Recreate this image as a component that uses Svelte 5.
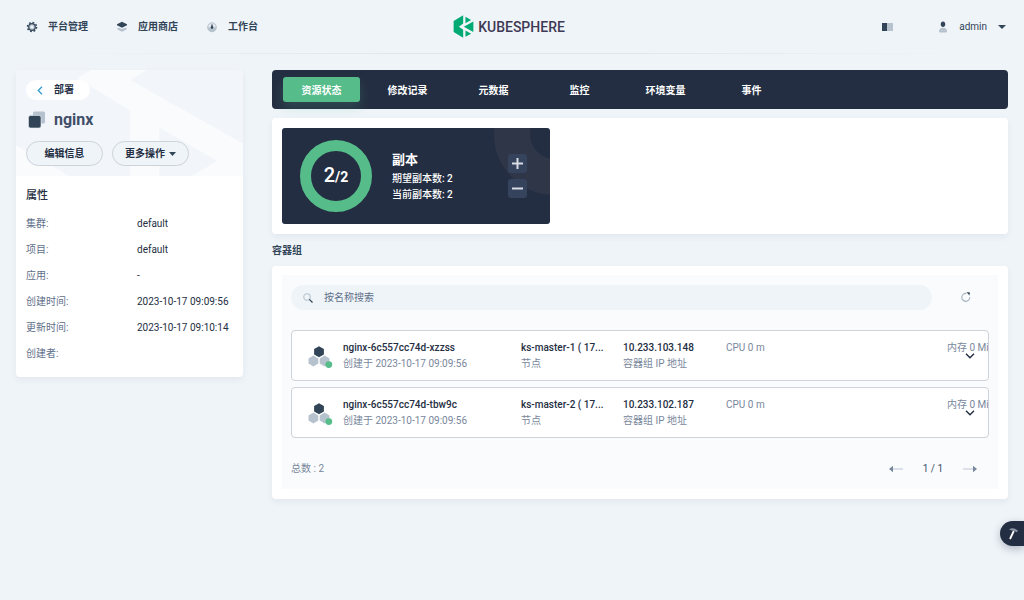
<script>
  const tabs = ["资源状态", "修改记录", "元数据", "监控", "环境变量", "事件"];
  let activeTab = $state("资源状态");

  const attributes = [
    { label: "集群", value: "default" },
    { label: "项目", value: "default" },
    { label: "应用", value: "-" },
    { label: "创建时间", value: "2023-10-17 09:09:56" },
    { label: "更新时间", value: "2023-10-17 09:10:14" },
    { label: "创建者", value: "" },
  ];

  const pods = [
    { name: "nginx-6c557cc74d-xzzss", created: "2023-10-17 09:09:56", node: "ks-master-1 ( 17...", ip: "10.233.103.148" },
    { name: "nginx-6c557cc74d-tbw9c", created: "2023-10-17 09:09:56", node: "ks-master-2 ( 17...", ip: "10.233.102.187" },
  ];

  let desired = $state(2);
  const current = 2;
  let query = $state("");
  let shown = $derived(pods.filter((pod) => pod.name.includes(query)));
</script>

<header class="topbar">
  <nav class="menu">
    <a href="#platform">
      <svg width="12" height="12" viewBox="0 0 12 12">
        <circle cx="6" cy="6" r="4.6" fill="none" stroke="#324558" stroke-width="1.4" stroke-dasharray="1.8 1.8" />
        <circle cx="6" cy="6" r="3.3" fill="#b6c2cd" stroke="#324558" stroke-width="1.2" />
        <circle cx="6" cy="6" r="1.6" fill="#eff4f9" />
      </svg>
      <span>平台管理</span>
    </a>
    <a href="#store">
      <svg width="12" height="12" viewBox="0 0 12 12">
        <path d="M1.5 6.5 6 8l4.5-1.5v2L6 10.8 1.5 8.5z" fill="#b6c2cd" />
        <path d="M6 .8 11 3.2v1L6 6.8 1 4.2v-1z" fill="#324558" />
      </svg>
      <span>应用商店</span>
    </a>
    <a href="#workspace">
      <svg width="12" height="12" viewBox="0 0 12 12">
        <circle cx="6" cy="6" r="4.2" fill="#e3e9ef" stroke="#b6c2cd" />
        <path d="M1.3 6.5h9.4A4.7 4.7 0 0 1 1.3 6.5z" fill="#b6c2cd" />
        <path d="M6 2.5 7.3 6.5a1.3 1.3 0 0 1-2.6 0z" fill="#324558" />
      </svg>
      <span>工作台</span>
    </a>
  </nav>

  <a class="logo" href="#home">
    <svg width="21" height="23" viewBox="44 46 62 70">
      <path d="M74 47v25L61 82l13 9v24L45 98V64zM105 66v32L76 82zM81 51l17 10-17 10zM81 93l17 10-17 9z" fill="#00aa72" />
    </svg>
    <span>KUBESPHERE</span>
  </a>

  <div class="tools">
    <button class="plain" aria-label="Docs">
      <svg width="11" height="8" viewBox="0 0 11 8">
        <path d="M0 0h5v8H0z" fill="#324558" />
        <path d="M5 0h6v8H5z" fill="#b6c2cd" />
      </svg>
    </button>
    <button class="plain user">
      <svg width="10" height="12" viewBox="0 0 10 12">
        <ellipse cx="5" cy="3.2" rx="2.2" ry="2.7" fill="#324558" />
        <path d="M1 10.5C1 8 2.5 6.8 5 6.8S9 8 9 10.5q0 1-1 1H2q-1 0-1-1z" fill="#b6c2cd" />
      </svg>
      <span>admin</span>
      <svg width="8" height="4" viewBox="0 0 8 4"><path d="M0 0h8L4 4z" fill="#324558" /></svg>
    </button>
  </div>
</header>

<div class="page">
  <aside class="panel side">
    <div class="side-head">
      <svg class="pattern" viewBox="48 30 681 317" preserveAspectRatio="none" aria-hidden="true">
        <path d="M275 30H440L390 60 729 250V347H575L652 302 478 202V347H390V150L230 55zM48 255 208 347H48z" fill="#fafbfd" />
      </svg>
      <a class="back" href="#deployments">
        <svg width="6" height="9" viewBox="0 0 6 9"><path d="M5 .7 1.2 4.5 5 8.3" fill="none" stroke="#329dce" stroke-width="1.3" /></svg>
        <span>部署</span>
      </a>
      <h1>
        <svg width="18" height="18" viewBox="0 0 18 18">
          <rect x="5" y="0.5" width="12" height="12" rx="1.5" fill="#b6c2cd" />
          <rect x="0.5" y="4.5" width="12.5" height="12.5" rx="2" fill="#324558" stroke="#e6ebf1" stroke-width=".6" />
        </svg>
        nginx
      </h1>
      <div class="actions">
        <button>编辑信息</button>
        <button>
          更多操作
          <svg width="7" height="4" viewBox="0 0 7 4"><path d="M0 0h7L3.5 4z" fill="#324558" /></svg>
        </button>
      </div>
    </div>
    <div class="side-body">
      <h2>属性</h2>
      <dl>
        {#each attributes as item}
          <div>
            <dt>{item.label}:</dt>
            <dd>{item.value}</dd>
          </div>
        {/each}
      </dl>
    </div>
  </aside>

  <main>
    <nav class="tabs">
      {#each tabs as tab}
        <button class:active={tab === activeTab} onclick={() => (activeTab = tab)}>{tab}</button>
      {/each}
    </nav>

    <section class="panel status">
      <div class="replicas">
        <svg class="rings" width="122" height="122" viewBox="0 0 122 122" aria-hidden="true">
          <circle cx="61" cy="61" r="43" fill="none" stroke="#2e3648" stroke-width="36" />
        </svg>
        <div class="gauge">
          <svg width="72" height="72" viewBox="0 0 72 72">
            <circle cx="36" cy="36" r="30.5" fill="none" stroke="#55bc8a" stroke-width="11" />
          </svg>
          <div class="count">{current}<b>/{desired}</b></div>
        </div>
        <div class="info">
          <h3>副本</h3>
          <p>期望副本数: {desired}</p>
          <p>当前副本数: {current}</p>
        </div>
        <div class="steps">
          <button aria-label="Add replica" onclick={() => desired++}>
            <svg width="11" height="11" viewBox="0 0 11 11"><path d="M5.5 0v11M0 5.5h11" stroke="#d8dde5" stroke-width="2" /></svg>
          </button>
          <button aria-label="Remove replica" onclick={() => desired--}>
            <svg width="11" height="11" viewBox="0 0 11 11"><path d="M0 5.5h11" stroke="#d8dde5" stroke-width="2" /></svg>
          </button>
        </div>
      </div>
    </section>

    <h2 class="section-title">容器组</h2>

    <section class="panel pods">
      <div class="pods-inner">
        <div class="toolbar">
          <label class="search">
            <svg width="10" height="10" viewBox="0 0 10 10">
              <circle cx="4" cy="4" r="3.2" fill="none" stroke="#b6c2cd" stroke-width="1.1" />
              <path d="M6.3 6.3 9.5 9.5" stroke="#324558" stroke-width="1.2" />
            </svg>
            <input type="text" placeholder="按名称搜索" aria-label="按名称搜索" bind:value={query} />
          </label>
          <button class="plain refresh" aria-label="Refresh">
            <svg width="10" height="11" viewBox="0 0 10 11">
              <path d="M5.5 1.4A4 4 0 1 0 8.8 5.2" fill="none" stroke="#a3b1be" stroke-width="1.1" />
              <path d="M5.6 0 9 .6 8.4 3.6z" fill="#324558" />
            </svg>
          </button>
        </div>

        <ul>
          {#each shown as pod}
            <li>
              <svg class="pod-icon" width="26" height="26" viewBox="0 0 26 26">
                <path d="M11 1.2 15.9 4v5.4L11 12.2 6.1 9.4V4z" fill="#324558" />
                <path d="M5.4 10.6 10.3 13.4v5.2L5.4 21.4.5 18.6v-5.2zM16.6 10.6l4.9 2.8v5.2l-4.9 2.8-4.9-2.8v-5.2z" fill="#b6c2cd" />
                <circle cx="20.8" cy="19.6" r="3.4" fill="#55bc8a" />
              </svg>
              <div>
                <strong>{pod.name}</strong>
                <p>创建于 {pod.created}</p>
              </div>
              <div>
                <strong>{pod.node}</strong>
                <p>节点</p>
              </div>
              <div>
                <strong>{pod.ip}</strong>
                <p>容器组 IP 地址</p>
              </div>
              <p>CPU 0 m</p>
              <p>内存 0 Mi</p>
              <button class="plain expand" aria-label="Expand">
                <svg width="10" height="6" viewBox="0 0 10 6"><path d="M1 .8 5 4.8 9 .8" fill="none" stroke="#242e42" stroke-width="1.4" /></svg>
              </button>
            </li>
          {/each}
        </ul>

        <footer>
          <span>总数 : {pods.length}</span>
          <div class="pager">
            <button class="plain" aria-label="Previous page">
              <svg width="14" height="8" viewBox="0 0 14 8"><path d="M3 4h11" stroke="#cfd8e0" stroke-width="1.5" /><path d="M0 4 4 .8v6.4z" fill="#79879c" /></svg>
            </button>
            <span>1 / 1</span>
            <button class="plain" aria-label="Next page">
              <svg width="14" height="8" viewBox="0 0 14 8"><path d="M0 4h11" stroke="#cfd8e0" stroke-width="1.5" /><path d="M14 4 10 .8v6.4z" fill="#79879c" /></svg>
            </button>
          </div>
        </footer>
      </div>
    </section>
  </main>
</div>

<button class="toolbox" aria-label="Toolbox">
  <svg width="12" height="14" viewBox="0 0 12 14">
    <path d="M6.8 4 3 12" stroke="#fff" stroke-width="1.8" />
    <path d="M2 2.5Q5 .3 8 1.8l3 2-1.2 1.5L7.5 4 5 3.5z" fill="#8d96a5" />
  </svg>
</button>

<style>
  :global(body) {
    background: #eff4f9;
    color: #242e42;
    font: 10px/16px Roboto, "Noto Sans CJK SC", sans-serif;
  }

  h1, h2, h3, p, dl, dd, ul {
    margin: 0;
    padding: 0;
  }

  a {
    color: inherit;
    text-decoration: none;
  }

  svg {
    display: block;
    flex: none;
  }

  button {
    font: inherit;
    color: inherit;
    cursor: pointer;
    padding: 0;
    border: 0;
  }

  .plain {
    background: none;
  }

  /* top bar */
  .topbar {
    display: grid;
    grid-template-columns: 1fr auto 1fr;
    align-items: center;
    height: 53px;
    padding: 0 18px 0 12px;
    border-bottom: 1px solid;
    border-image: linear-gradient(90deg, #eff4f9 5%, #e0e6ec 40%, #e0e6ec 60%, #eff4f9 95%) 1;
  }

  .menu {
    display: flex;
    gap: 28px;
    padding-left: 14px;
    font-weight: 700;
    color: #324558;
  }

  .menu a {
    display: flex;
    align-items: center;
    gap: 10px;
  }

  .logo {
    display: flex;
    align-items: center;
    gap: 4px;
    font-size: 14px;
    line-height: 24px;
    font-weight: 500;
    color: #3f3a54;
  }

  .tools {
    display: flex;
    justify-content: flex-end;
    gap: 45px;
  }

  .user {
    display: flex;
    align-items: center;
    gap: 11px;
    color: #324558;
  }

  /* layout */
  .page {
    display: grid;
    grid-template-columns: 227px minmax(0, 1fr);
    align-items: start;
    gap: 29px;
    padding: 16px;
  }

  .panel {
    background: #fff;
    border-radius: 4px;
    box-shadow: 0 3px 6px rgba(36, 46, 66, 0.06);
  }

  /* sidebar */
  .side {
    overflow: hidden;
  }

  .side-head {
    position: relative;
    padding: 10px;
    background: #f2f5fa;
  }

  .pattern {
    position: absolute;
    inset: 0;
    width: 100%;
    height: 100%;
  }

  .back {
    position: relative;
    display: inline-flex;
    align-items: center;
    gap: 11px;
    height: 20px;
    padding: 0 16px 0 11px;
    border-radius: 10px;
    background: #fff;
    font-weight: 700;
    vertical-align: top;
  }

  h1 {
    position: relative;
    display: flex;
    align-items: center;
    gap: 8px;
    margin: 7px 0 9px;
    padding-left: 2px;
    font-size: 16px;
    line-height: 25px;
    font-weight: 700;
    color: #404e68;
  }

  .actions {
    position: relative;
    display: flex;
    gap: 9px;
  }

  .actions button {
    display: flex;
    align-items: center;
    justify-content: center;
    gap: 4px;
    width: 77px;
    height: 25px;
    border: 1px solid #ccd3db;
    border-radius: 13px;
    background: #eff4f9;
    font-weight: 700;
  }

  .side-body {
    padding: 12px 10px 10px;
  }

  .side-body h2 {
    font-size: 11px;
    line-height: 16px;
    font-weight: 500;
  }

  dl {
    padding-top: 7px;
  }

  dl div {
    display: grid;
    grid-template-columns: 111px 1fr;
    line-height: 26px;
  }

  dt {
    color: #5f708a;
  }

  dd {
    white-space: nowrap;
  }

  /* tabs */
  .tabs {
    display: flex;
    gap: 9px;
    padding: 7px 11px;
    border-radius: 4px;
    background: #242e42;
  }

  .tabs button {
    width: 77px;
    height: 25px;
    padding-top: 2px;
    border-radius: 3px;
    background: none;
    color: #fff;
    font-weight: 700;
  }

  .tabs .active {
    background: #55bc8a;
    box-shadow: 0 6px 12px rgba(85, 188, 138, 0.2);
  }

  /* replicas */
  .status {
    margin-top: 9px;
    padding: 10px;
  }

  .replicas {
    position: relative;
    display: flex;
    align-items: center;
    gap: 20px;
    width: 268px;
    height: 96px;
    box-sizing: border-box;
    padding: 0 23px 0 18px;
    overflow: hidden;
    border-radius: 3px;
    background: #242e42;
    color: #fff;
  }

  .rings {
    position: absolute;
    top: -55px;
    right: -66px;
  }

  .gauge {
    display: grid;
    place-items: center;
  }

  .gauge > * {
    grid-area: 1 / 1;
  }

  .count {
    font-size: 20px;
    line-height: 24px;
    font-weight: 500;
  }

  .count b {
    font-size: 14px;
  }

  .info {
    flex: 1;
    font-weight: 500;
  }

  .info h3 {
    font-size: 13px;
    line-height: 22px;
  }

  .steps {
    position: relative;
    display: grid;
    gap: 6px;
  }

  .steps button {
    display: grid;
    place-items: center;
    width: 19px;
    height: 19px;
    border-radius: 3px;
    background: #36435c;
  }

  /* pods */
  .section-title {
    padding: 9px 0 7px;
    font-size: 10px;
    line-height: 16px;
    font-weight: 700;
    color: #324558;
  }

  .pods {
    padding: 9px 10px 10px;
  }

  .pods-inner {
    padding: 10px 9px;
    background: #f9fbfd;
  }

  .toolbar {
    display: flex;
    align-items: center;
    padding-right: 18px;
  }

  .search {
    display: flex;
    align-items: center;
    flex: 1;
    gap: 11px;
    height: 25px;
    padding: 0 12px;
    border-radius: 13px;
    background: #eff4f9;
  }

  .search input {
    flex: 1;
    min-width: 0;
    padding: 0;
    border: 0;
    outline: 0;
    background: none;
    font: inherit;
    color: inherit;
  }

  .search input::placeholder {
    color: #5f708a;
  }

  .refresh {
    margin-left: 29px;
  }

  ul {
    display: grid;
    gap: 6px;
    margin-top: 20px;
    list-style: none;
  }

  li {
    position: relative;
    display: grid;
    grid-template-columns: 35px 178px 102px 103px 1fr 41px;
    align-items: start;
    height: 51px;
    box-sizing: border-box;
    padding: 9px 0 0 16px;
    overflow: hidden;
    border: 1px solid #ccd3db;
    border-radius: 4px;
    background: #fff;
    color: #79879c;
    white-space: nowrap;
  }

  .pod-icon {
    margin-top: 5px;
  }

  strong {
    display: block;
    font-weight: 500;
    color: #242e42;
  }

  .expand {
    position: absolute;
    right: 13px;
    top: 22px;
  }

  footer {
    display: flex;
    align-items: center;
    justify-content: space-between;
    padding: 23px 12px 2px 0;
    color: #79879c;
  }

  .pager {
    display: flex;
    align-items: center;
    gap: 20px;
    color: #404e68;
  }

  .toolbox {
    position: fixed;
    right: 0;
    top: 521px;
    display: flex;
    align-items: center;
    width: 24px;
    height: 25px;
    padding-left: 7px;
    border-radius: 13px 0 0 13px;
    background: #242e42;
    box-shadow: 0 3px 8px rgba(36, 46, 66, 0.3);
  }
</style>
